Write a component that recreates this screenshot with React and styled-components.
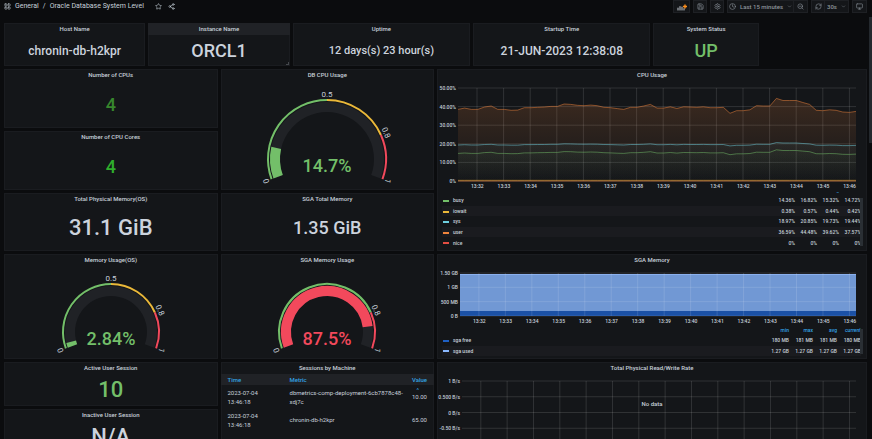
import styled, { createGlobalStyle } from "styled-components";
import {
  ChevronDown,
  Clock,
  LayoutGrid,
  Monitor,
  RefreshCw,
  Save,
  Settings,
  Share2,
  Star,
  ZoomOut,
} from "lucide-react";

const GlobalStyle = createGlobalStyle`
  * {
    box-sizing: border-box;
  }

  body {
    margin: 0;
    background-color: #0b0c0e;
    color: #c7d0d9;
    font-family: Roboto, "Liberation Sans", sans-serif;
    font-size: 6px;
    overflow: hidden;
  }
`;

const Page = styled.div`
  position: relative;
  display: flex;
  flex-direction: column;
  height: 100vh;
  overflow: hidden;
`;

const PageScroll = styled.div`
  position: absolute;
  top: 17px;
  right: 0;
  width: 3px;
  height: 126px;
  background-color: #24292e;
`;

const Toolbar = styled.header`
  display: flex;
  flex: none;
  align-items: center;
  justify-content: space-between;
  height: 13px;
  margin-bottom: 10px;
  padding: 0 5px 0 4px;
`;

const Crumbs = styled.nav`
  display: flex;
  align-items: center;
  gap: 4px;
  font-size: 7px;
  line-height: 13px;

  & a {
    color: #c7d0d9;
    text-decoration: none;
  }
`;

const CrumbActions = styled.div`
  display: flex;
  gap: 6px;
  margin-left: 7px;
`;

const IconButton = styled.button`
  display: flex;
  padding: 0;
  border: 0;
  background: none;
  color: #c7d0d9;
`;

const Tools = styled.div`
  display: flex;
  gap: 3px;
`;

const Group = styled.div`
  display: flex;

  & button + button {
    border-left: 0;
  }
`;

const ToolButton = styled.button`
  display: flex;
  align-items: center;
  justify-content: center;
  gap: 4px;
  width: ${(props) => props.$width || 14}px;
  height: 13px;
  padding: 0;
  border: 1px solid #1e2024;
  background-color: #141619;
  color: #8e959c;
  font-family: inherit;
  font-size: 6px;
  font-weight: 500;
  white-space: nowrap;
`;

const Dashboard = styled.main`
  display: flex;
  flex-direction: column;
  gap: 3px;
  padding: 0 5px 0 4px;
`;

const Row = styled.div`
  display: grid;
  grid-template-columns: repeat(24, 1fr);
  gap: 3px;
`;

const Column = styled.div`
  display: flex;
  flex-direction: column;
  gap: 3px;
  min-width: 0;
  grid-column: span ${(props) => props.$span};
`;

const PanelBox = styled.section`
  position: relative;
  display: flex;
  flex-direction: column;
  flex: none;
  min-width: 0;
  height: ${(props) => props.$height}px;
  grid-column: span ${(props) => props.$span || 1};
  background-color: #141619;
  box-shadow: inset 0 0 0 1px #1a1c20;
`;

const PanelTitle = styled.h2`
  flex: none;
  margin: 0;
  background-color: ${(props) => (props.$hover ? "#202226" : "transparent")};
  font-size: 6px;
  font-weight: 500;
  line-height: 12px;
  text-align: center;
`;

const Resize = styled.span`
  position: absolute;
  right: 1px;
  bottom: 1px;
  width: 3px;
  height: 3px;
  border-right: 1px solid #44474c;
  border-bottom: 1px solid #44474c;
`;

const Value = styled.div`
  display: flex;
  flex: 1;
  align-items: center;
  justify-content: center;
  color: ${(props) => props.$color || "#ccd3dd"};
  font-size: ${(props) => props.$size || 18}px;
  font-weight: 500;
  line-height: 24px;
  white-space: nowrap;
`;

const GaugeSvg = styled.svg`
  display: block;
  margin: 0 auto;

  & text {
    font-size: 8px;
    text-anchor: middle;
    fill: #c7d0d9;
  }

  & .value {
    font-size: 18px;
    font-weight: 500;
  }
`;

const GraphBody = styled.div`
  display: grid;
  grid-template-columns: ${(props) => props.$axis}px 1fr;
  column-gap: 2px;
  padding: 7px 11px 0 0;
`;

const YAxis = styled.div`
  display: flex;
  flex-direction: column;
  justify-content: space-between;
  height: ${(props) => props.$height + 6}px;
  margin: -3px 0;
  font-size: 5px;
  font-weight: 500;
  line-height: 6px;
  text-align: right;
  white-space: nowrap;
`;

const XAxis = styled.div`
  grid-column: 2;
  display: flex;
  margin: 2px -7px 0 6px;
  font-size: 5px;
  font-weight: 500;
  line-height: 7px;

  & span {
    flex: 1;
    width: 0;
    text-align: center;
  }
`;

const PlotSvg = styled.svg`
  display: block;
  width: 100%;
  height: ${(props) => props.$height}px;
  overflow: visible;

  & * {
    vector-effect: non-scaling-stroke;
  }
`;

const NoData = styled.div`
  position: absolute;
  top: 36px;
  left: 0;
  right: 0;
  font-size: 6px;
  font-weight: 500;
  line-height: 12px;
  text-align: center;
`;

const LegendBox = styled.div`
  position: relative;
  display: flex;
  flex-direction: column;
  justify-content: flex-end;
  height: ${(props) => props.$height}px;
  margin: auto 4px 3px 5px;
  padding-right: 2px;
  overflow: hidden;
`;

const LegendScroll = styled.div`
  position: absolute;
  right: 0;
  bottom: 2px;
  width: 3px;
  height: ${(props) => props.$height}px;
  background-color: #2a2f34;
`;

const LegendTable = styled.table`
  flex: none;
  width: 100%;
  height: ${(props) => props.$height}px;
  border-collapse: collapse;
  font-size: 5px;
  font-weight: 500;
  line-height: 6px;
  white-space: nowrap;

  & th,
  & td {
    height: 10px;
    padding: 2px 0;
    text-align: right;
    font-weight: 500;
    width: ${(props) => props.$col}px;
    min-width: ${(props) => props.$col}px;
  }

  & thead th {
    color: #33a2e5;
  }

  & tbody th,
  & thead td {
    width: 100%;
    padding-left: 1px;
    text-align: left;
  }

  & tbody tr:nth-child(even) {
    background-color: #1a1b1f;
  }
`;

const Swatch = styled.span`
  display: inline-block;
  width: 6px;
  height: 2px;
  margin-right: 4px;
  background-color: ${(props) => props.$color};
  vertical-align: middle;
`;

const SessionTable = styled.table`
  width: 100%;
  table-layout: fixed;
  border-collapse: collapse;
  font-size: 6px;
  line-height: 9px;

  & th {
    height: 11px;
    padding: 0 0 0 7px;
    background-color: #202226;
    color: #33a2e5;
    font-weight: 500;
    text-align: left;
  }

  & td {
    height: 23px;
    padding: 2px 0 2px 7px;
    overflow-wrap: anywhere;
  }

  & .time {
    width: 62px;
    padding-right: 20px;
  }

  & .value {
    width: 28px;
    padding-left: 0;
    padding-right: 7px;
    text-align: right;
  }
`;

const SortMark = styled.span`
  position: absolute;
  top: 25px;
  right: 15px;
  color: #33a2e5;
  font-size: 6px;
  line-height: 6px;
`;

const GREEN = "#73bf69";
const YELLOW = "#eab839";
const RED = "#f2495c";

const times = Array.from({ length: 15 }, (_, i) => `13:${32 + i}`);

const user = [
  38.5, 39.2, 38.5, 38.5, 39.8, 40.3, 38.5, 38.5, 38, 38.1, 39.4, 39.4, 39.6,
  39.8, 40.1, 40.1, 41.4, 41.2, 40.7, 40.5, 40.8, 40.5, 39.6, 39.4, 38.9, 38.5,
  39.6, 39.6, 40.3, 41.2, 39.2, 39.2, 39.9, 39, 39.9, 39.8, 39.6, 39.9, 39.4,
  39.4, 39.6, 36.4, 37.8, 37.8, 38.3, 40.5, 40.3, 40.3, 44.4, 43.3, 43.3, 43.3,
  42.2, 41.2, 38, 37.8, 38.3, 38, 37.1, 36.9, 37.4,
];
const sys = user.map((v) => 19.6 + (v - 39.6) * 0.22);
const busy = user.map((v) => 15.2 + (v - 39.6) * 0.33);
const iowait = user.map(() => 0.4);

const cpuLegend = [
  ["busy", GREEN, "14.36%", "16.82%", "15.32%", "14.72%"],
  ["iowait", YELLOW, "0.38%", "0.57%", "0.44%", "0.42%"],
  ["sys", "#6ed0e0", "18.97%", "20.85%", "19.73%", "19.44%"],
  ["user", "#ef843c", "36.59%", "44.48%", "39.62%", "37.57%"],
  ["nice", "#e24d42", "0%", "0%", "0%", "0%"],
];

const sgaLegend = [
  ["sga free", "#1f60c4", "180 MB", "181 MB", "181 MB", "180 MB"],
  ["sga used", "#8ab8ff", "1.27 GB", "1.27 GB", "1.27 GB", "1.27 GB"],
];

const Panel = ({ title, height, span, hover, children }) => (
  <PanelBox $height={height} $span={span}>
    <PanelTitle $hover={hover}>{title}</PanelTitle>
    {children}
    {hover && <Resize />}
  </PanelBox>
);

const Stat = ({ value, size, color, ...panel }) => (
  <Panel {...panel}>
    <Value $size={size} $color={color}>
      {value}
    </Value>
  </Panel>
);

// The dial runs from 20 degrees under the left side to 20 under the right one
const toAngle = (part) => ((part * 220 - 200) * Math.PI) / 180;

const arc = (cx, cy, r, from, to) => {
  const a = toAngle(from);
  const b = toAngle(to);
  const large = b - a > Math.PI ? 1 : 0;
  return `M${cx + r * Math.cos(a)} ${cy + r * Math.sin(a)} A${r} ${r} 0 ${large} 1 ${cx + r * Math.cos(b)} ${cy + r * Math.sin(b)}`;
};

const Gauge = ({ radius, cy, value, text, color, steps, ...panel }) => {
  const cx = 80;
  const labels = [0, ...steps.map((step) => step.to)];
  const track = radius - 8;

  return (
    <Panel {...panel}>
      <GaugeSvg width="160" height={cy + 27} viewBox={`0 0 160 ${cy + 27}`}>
        <g fill="none">
          <path d={arc(cx, cy, track, 0, 1)} stroke="#202226" strokeWidth="10" />
          <path
            d={arc(cx, cy, track, 0, value)}
            stroke={color}
            strokeWidth="10"
          />
          {steps.map((step) => (
            <path
              key={step.to}
              d={arc(cx, cy, radius - 1, step.from, step.to)}
              stroke={step.color}
              strokeWidth="2"
            />
          ))}
        </g>
        {labels.map((label) => (
          <text
            key={label}
            transform={`translate(${cx} ${cy}) rotate(${label * 220 - 110}) translate(0 ${-radius - 2})`}
          >
            {label}
          </text>
        ))}
        <text className="value" x={cx} y={cy + 13} style={{ fill: color }}>
          {text}
        </text>
      </GaugeSvg>
    </Panel>
  );
};

const threeSteps = [
  { from: 0, to: 0.5, color: GREEN },
  { from: 0.5, to: 0.8, color: YELLOW },
  { from: 0.8, to: 1, color: RED },
];

const twoSteps = [
  { from: 0, to: 0.8, color: GREEN },
  { from: 0.8, to: 1, color: RED },
];

const Grid = ({ height, rows, first, step }) => (
  <g stroke="#fff" strokeOpacity="0.12">
    {Array.from({ length: rows + 1 }, (_, i) => (
      <line key={i} x1="0" x2="398" y1={(i * height) / rows} y2={(i * height) / rows} />
    ))}
    {times.map((time, i) => (
      <line key={time} x1={first + i * step} x2={first + i * step} y1="0" y2={height} />
    ))}
  </g>
);

const XLabels = () => (
  <XAxis>
    {times.map((time) => (
      <span key={time}>{time}</span>
    ))}
  </XAxis>
);

const Legend = ({ height, tableHeight, thumb, col, rows }) => (
  <LegendBox $height={height}>
    <LegendTable $col={col} $height={tableHeight}>
      <thead>
        <tr>
          <td />
          <th scope="col">min</th>
          <th scope="col">max</th>
          <th scope="col">avg</th>
          <th scope="col">current</th>
        </tr>
      </thead>
      <tbody>
        {rows.map(([name, color, ...values]) => (
          <tr key={name}>
            <th scope="row">
              <Swatch $color={color} />
              {name}
            </th>
            {values.map((value, i) => (
              <td key={i}>{value}</td>
            ))}
          </tr>
        ))}
      </tbody>
    </LegendTable>
    <LegendScroll $height={thumb} />
  </LegendBox>
);

const linePoints = (values) =>
  values
    .map((v, i) => `${((i * 398) / (values.length - 1)).toFixed(1)},${(93 - (v / 50) * 93).toFixed(1)}`)
    .join(" ");

const Series = ({ id, values, color, fill }) => (
  <>
    <linearGradient id={id} gradientUnits="userSpaceOnUse" x1="0" y1="0" x2="0" y2="93">
      <stop offset="0" stopColor={color} stopOpacity={fill} />
      <stop offset="1" stopColor={color} stopOpacity="0" />
    </linearGradient>
    <polygon points={`0,93 ${linePoints(values)} 398,93`} fill={`url(#${id})`} />
    <polyline points={linePoints(values)} fill="none" stroke={color} strokeOpacity="0.5" />
  </>
);

const CpuUsage = () => (
  <Panel title="CPU Usage" height={182}>
    <GraphBody $axis={19}>
      <YAxis $height={93}>
        <span>50.00%</span>
        <span>40.00%</span>
        <span>30.00%</span>
        <span>20.00%</span>
        <span>10.00%</span>
        <span>0%</span>
      </YAxis>
      <PlotSvg $height={93} viewBox="0 0 398 93" preserveAspectRatio="none">
        <Grid height={93} rows={5} first={19} step={26.6} />
        <Series id="user" values={user} color="#ef843c" fill={0.2} />
        <Series id="sys" values={sys} color="#6ed0e0" fill={0.14} />
        <Series id="busy" values={busy} color={GREEN} fill={0.14} />
        <Series id="iowait" values={iowait} color={YELLOW} fill={0.1} />
        <line x1="0" x2="398" y1="93" y2="93" stroke="#ef843c" strokeOpacity="0.6" />
      </PlotSvg>
      <XLabels />
    </GraphBody>
    <Legend height={56} tableHeight={63} thumb={48} col={22} rows={cpuLegend} />
  </Panel>
);

const SgaMemory = () => (
  <Panel title="SGA Memory" height={105}>
    <GraphBody $axis={21}>
      <YAxis $height={43}>
        <span>1.50 GB</span>
        <span>1 GB</span>
        <span>500 MB</span>
        <span>0 B</span>
      </YAxis>
      <PlotSvg $height={43} viewBox="0 0 398 43" preserveAspectRatio="none">
        <rect y="1" width="398" height="42" fill="#7198d4" />
        <rect y="1" width="398" height="1" fill="#8ab0ee" />
        <rect y="38" width="398" height="5" fill="#1b51a6" />
        <Grid height={43} rows={3} first={19} step={26.6} />
      </PlotSvg>
      <XLabels />
    </GraphBody>
    <Legend height={31} tableHeight={31} thumb={25} col={24} rows={sgaLegend} />
  </Panel>
);

const ReadWriteRate = () => (
  <Panel title="Total Physical Read/Write Rate" height={105}>
    <GraphBody $axis={23}>
      <YAxis $height={63}>
        <span>1 B/s</span>
        <span>0.500 B/s</span>
        <span>0 B/s</span>
        <span>-0.50 B/s</span>
        <span>-1 B/s</span>
      </YAxis>
      <PlotSvg $height={63} viewBox="0 0 398 63" preserveAspectRatio="none">
        <Grid height={63} rows={4} first={19} step={26.6} />
      </PlotSvg>
      <XLabels />
    </GraphBody>
    <NoData>No data</NoData>
  </Panel>
);

const Sessions = () => (
  <Panel title="Sessions by Machine" height={105}>
    <SessionTable>
      <thead>
        <tr>
          <th className="time">Time</th>
          <th>Metric</th>
          <th className="value">Value</th>
        </tr>
      </thead>
      <tbody>
        <tr>
          <td className="time">2023-07-04 13:46:18</td>
          <td>dbmetrics-comp-deployment-6cb7878c48-xdj7c</td>
          <td className="value">10.00</td>
        </tr>
        <tr>
          <td className="time">2023-07-04 13:46:18</td>
          <td>chronin-db-h2kpr</td>
          <td className="value">65.00</td>
        </tr>
      </tbody>
    </SessionTable>
    <SortMark>^</SortMark>
  </Panel>
);

const AddPanelIcon = () => (
  <svg width="10" height="8" viewBox="0 0 10 8" aria-hidden="true">
    <path
      d="M1 7V5M3 7V3.5M5 7V4M7 7V5.5"
      stroke="#a9afb5"
      strokeWidth="1.2"
      strokeLinecap="round"
    />
    <path d="M8 1.5v4M6 3.5h4" stroke="#ff8f1c" strokeWidth="1.4" />
  </svg>
);

const App = () => {
  return (
    <Page>
      <GlobalStyle />

      <Toolbar>
        <Crumbs>
          <LayoutGrid size={7} />
          <a href="#general">General</a>
          <span>/</span>
          <a href="#dashboard">Oracle Database System Level</a>
          <CrumbActions>
            <IconButton aria-label="Mark as favorite">
              <Star size={7} />
            </IconButton>
            <IconButton aria-label="Share dashboard">
              <Share2 size={7} />
            </IconButton>
          </CrumbActions>
        </Crumbs>

        <Tools>
          <ToolButton aria-label="Add panel" $width={17}>
            <AddPanelIcon />
          </ToolButton>
          <ToolButton aria-label="Save dashboard">
            <Save size={7} />
          </ToolButton>
          <ToolButton aria-label="Dashboard settings">
            <Settings size={7} />
          </ToolButton>
          <Group>
            <ToolButton $width={67}>
              <Clock size={7} />
              Last 15 minutes
              <ChevronDown size={5} />
            </ToolButton>
            <ToolButton aria-label="Zoom out">
              <ZoomOut size={7} />
            </ToolButton>
          </Group>
          <Group>
            <ToolButton aria-label="Refresh dashboard">
              <RefreshCw size={7} />
            </ToolButton>
            <ToolButton $width={24}>
              30s
              <ChevronDown size={5} />
            </ToolButton>
          </Group>
          <ToolButton aria-label="Cycle view mode" $width={15}>
            <Monitor size={7} />
          </ToolButton>
        </Tools>
      </Toolbar>

      <Dashboard>
        <Row>
          <Stat title="Host Name" height={43} span={4} size={12} value="chronin-db-h2kpr" />
          <Stat title="Instance Name" height={43} span={4} value="ORCL1" hover />
          <Stat title="Uptime" height={43} span={5} size={11} value="12 days(s) 23 hour(s)" />
          <Stat title="Startup Time" height={43} span={5} size={12} value="21-JUN-2023 12:38:08" />
          <Stat title="System Status" height={43} span={3} color={GREEN} value="UP" />
        </Row>

        <Row>
          <Column $span={6}>
            <Stat title="Number of CPUs" height={59} color="#37872d" value="4" />
            <Stat title="Number of CPU Cores" height={59} color="#2fae2c" value="4" />
            <Stat title="Total Physical Memory(OS)" height={58} size={22} value="31.1 GiB" />
            <Gauge
              title="Memory Usage(OS)"
              height={105}
              radius={49}
              cy={66}
              value={0.0284}
              text="2.84%"
              color={GREEN}
              steps={threeSteps}
            />
            <Stat title="Active User Session" height={44} size={22} color={GREEN} value="10" />
            <Stat title="Inactive User Session" height={44} size={22} value="N/A" />
          </Column>

          <Column $span={6}>
            <Gauge
              title="DB CPU Usage"
              height={121}
              radius={60}
              cy={78}
              value={0.147}
              text="14.7%"
              color={GREEN}
              steps={threeSteps}
            />
            <Stat title="SGA Total Memory" height={58} value="1.35 GiB" />
            <Gauge
              title="SGA Memory Usage"
              height={105}
              radius={49}
              cy={66}
              value={0.875}
              text="87.5%"
              color={RED}
              steps={twoSteps}
            />
            <Sessions />
          </Column>

          <Column $span={12}>
            <CpuUsage />
            <SgaMemory />
            <ReadWriteRate />
          </Column>
        </Row>
      </Dashboard>

      <PageScroll />
    </Page>
  );
};

export default App;
